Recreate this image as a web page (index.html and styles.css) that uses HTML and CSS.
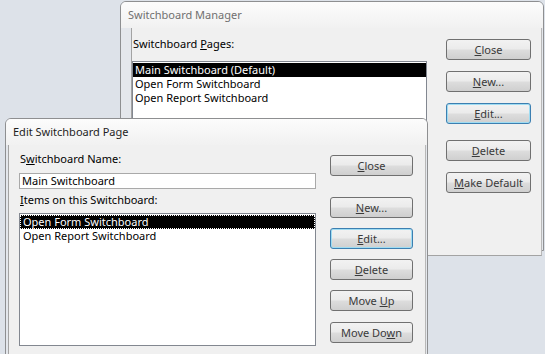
FILE: index.html
```html
<!DOCTYPE html>
<html lang="en">
<head>
    <meta charset="UTF-8">
    <title>Switchboard Manager</title>
    <link rel="stylesheet" href="styles.css">
</head>
<body>
    <div class="desktop">
        <!-- back window -->
        <div class="window manager">
            <div class="titlebar">Switchboard Manager</div>
            <div class="frame">
                <div class="body">
                    <div class="main">
                        <div class="label">Switchboard <u>P</u>ages:</div>
                        <div class="listbox pages">
                            <div class="row selected">Main Switchboard (Default)</div>
                            <div class="row">Open Form Switchboard</div>
                            <div class="row">Open Report Switchboard</div>
                        </div>
                    </div>
                    <div class="buttons">
                        <button class="btn"><u>C</u>lose</button>
                        <button class="btn"><u>N</u>ew...</button>
                        <button class="btn focus"><u>E</u>dit...</button>
                        <button class="btn gap-delete"><u>D</u>elete</button>
                        <button class="btn"><u>M</u>ake Default</button>
                    </div>
                </div>
            </div>
        </div>

        <!-- front window -->
        <div class="window editor">
            <div class="titlebar">Edit Switchboard Page</div>
            <div class="frame">
                <div class="body">
                    <div class="main">
                        <div class="label">S<u>w</u>itchboard Name:</div>
                        <div class="textbox">Main Switchboard</div>
                        <div class="label items-label"><u>I</u>tems on this Switchboard:</div>
                        <div class="listbox items">
                            <div class="row selected focused">Open Form Switchboard</div>
                            <div class="row">Open Report Switchboard</div>
                        </div>
                    </div>
                    <div class="buttons">
                        <button class="btn"><u>C</u>lose</button>
                        <button class="btn gap-new"><u>N</u>ew...</button>
                        <button class="btn focus"><u>E</u>dit...</button>
                        <button class="btn"><u>D</u>elete</button>
                        <button class="btn">Move <u>U</u>p</button>
                        <button class="btn">Move Do<u>w</u>n</button>
                    </div>
                </div>
            </div>
        </div>
    </div>
</body>
</html>
```

FILE: styles.css
```css
body {
    margin: 0;
    font-family: "Noto Sans", "Liberation Sans", sans-serif;
    font-size: 11px;
    color: #000;
}
.desktop {
    position: relative;
    width: 545px;
    height: 354px;
    overflow: hidden;
    background-color: #dde2e9;
}
.window {
    position: absolute;
    box-sizing: border-box;
    border: 1px solid #8e8f91;
    border-radius: 6px 6px 0 0;
    background-color: #e4e7ec;
    display: flex;
    flex-direction: column;
}
.manager {
    left: 120px;
    top: 1px;
    width: 424px;
    height: 250px;
}
.editor {
    left: 5px;
    top: 118px;
    width: 423px;
    height: 250px;
}
.titlebar {
    height: 26px;
    line-height: 26px;
    padding-left: 7px;
    font-size: 11px;
    border-radius: 5px 5px 0 0;
    background: linear-gradient(#fcfcfc, #f1f1f1);
}
.manager .titlebar {
    color: #707070;
}
.editor .titlebar {
    color: #1e1e1e;
}
.frame {
    flex: 1;
    display: flex;
    padding: 0 1px 1px 10px;
}
.editor .frame {
    padding: 0 1px 0 2px;
}
.body {
    flex: 1;
    display: flex;
    background-color: #f0f0f0;
    border-left: 1px solid #a3a3a3;
    border-right: 1px solid #b8b8b8;
    border-bottom: 1px solid #a3a3a3;
}
.main {
    display: flex;
    flex-direction: column;
}
.manager .main {
    flex: 1;
    padding-top: 8px;
}
.editor .main {
    width: 297px;
    padding: 6px 0 0 10px;
}
.label {
    height: 15px;
    line-height: 15px;
    padding-left: 1px;
}
.manager .label {
    margin-bottom: 10px;
}
.listbox {
    background-color: #fff;
    border: 1px solid #828790;
    padding: 1px 0;
}
.pages {
    height: 190px;
}
.items {
    margin-top: 6px;
    height: 129px;
}
.row {
    height: 14px;
    line-height: 14px;
    padding-left: 3px;
    white-space: nowrap;
}
.pages .row {
    padding-left: 2px;
}
.selected {
    background-color: #000;
    color: #fff;
}
.focused {
    outline: 1px dotted #fff;
    outline-offset: -1px;
}
.textbox {
    margin-top: 7px;
    height: 14px;
    line-height: 14px;
    background-color: #fff;
    border: 1px solid #a9a9a9;
    padding-left: 2px;
}
.items-label {
    margin-top: 3px;
}
.buttons {
    display: flex;
    flex-direction: column;
    gap: 11px;
}
.manager .buttons {
    width: 85px;
    margin: 11px 10px 0 19px;
}
.editor .buttons {
    width: 83px;
    margin: 10px 0 0 14px;
    gap: 10px;
}
.btn {
    box-sizing: border-box;
    height: 21px;
    padding: 0;
    font-family: inherit;
    font-size: 11px;
    font-weight: normal;
    color: #3a3a3a;
    border: 1px solid #707070;
    border-radius: 3px;
    background: linear-gradient(#f2f2f2 0%, #ebebeb 48%, #dddddd 52%, #cfcfcf 100%);
}
.btn.focus {
    border-color: #3c7fb1;
    box-shadow: inset 0 0 0 1px #9fdcf2;
}
.gap-delete {
    margin-top: 5px;
}
.gap-new {
    margin-top: 11px;
}
.editor .btn:last-child {
    margin-top: 1px;
}
```
